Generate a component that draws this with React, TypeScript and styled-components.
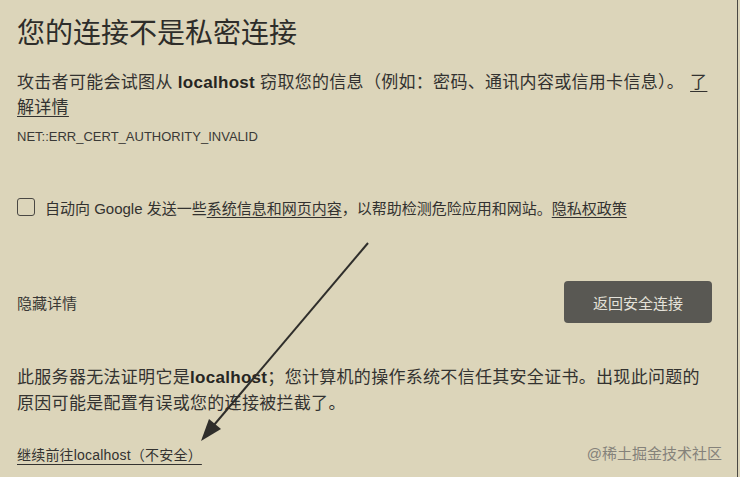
import styled, { createGlobalStyle } from "styled-components"

const Global = createGlobalStyle`
  html, body {
    margin: 0;
    padding: 0;
    background: #dcd5ba;
  }
  body {
    font-family: "Liberation Sans", "Noto Sans CJK SC", sans-serif;
    color: #333230;
  }
`

const Page = styled.div`
  position: relative;
  box-sizing: border-box;
  width: 738px;
  height: 477px;
  padding: 16px 25px 0 17px;
  border-right: 1px solid #4a4843;
  background: #dcd5ba;
  overflow: hidden;
`

const Title = styled.h1`
  margin: 0;
  font-size: 28px;
  line-height: 36px;
  font-weight: 400;
  color: #2e2d2a;
`

const Lead = styled.p`
  margin: 18px 0 0;
  font-size: 17px;
  line-height: 25px;
  letter-spacing: 0.3px;
`

const Strong = styled.b`
  font-weight: 700;
  color: #262522;
`

const Link = styled.a`
  color: inherit;
  text-decoration: underline;
  text-underline-offset: 3px;
  text-decoration-thickness: 1px;
`

const Spaced = styled.span`
  margin-left: 6px;
`

const ErrorCode = styled.div`
  margin-top: 7px;
  font-size: 13px;
  line-height: 20px;
  color: #3a3936;
`

const OptIn = styled.label`
  display: flex;
  align-items: center;
  gap: 10px;
  margin-top: 48px;
  height: 24px;
  font-size: 15px;
`

const Box = styled.input`
  appearance: none;
  margin: 0;
  width: 18px;
  height: 18px;
  border: 1.5px solid #4a4844;
  border-radius: 3px;
  background: transparent;
  flex-shrink: 0;
`

const Actions = styled.div`
  display: flex;
  align-items: center;
  justify-content: space-between;
  margin-top: 62px;
  height: 42px;
`

const Toggle = styled.span`
  font-size: 15px;
  color: #3a3936;
`

const Primary = styled.button`
  width: 148px;
  height: 42px;
  border: none;
  border-radius: 4px;
  background: #595853;
  color: #e4e2da;
  font-family: inherit;
  font-size: 15px;
`

const Explain = styled.p`
  margin: 42px 0 0;
  font-size: 17px;
  line-height: 26px;
  letter-spacing: 0.3px;
`

const Footer = styled.div`
  display: flex;
  align-items: center;
  justify-content: space-between;
  margin-top: 28px;
  margin-right: -10px;
`

const Proceed = styled(Link)`
  font-size: 14px;
  line-height: 20px;
  padding-right: 4px;
  text-underline-offset: 4px;
  letter-spacing: 0.2px;
`

const Mark = styled.span`
  font-size: 15px;
  color: #85827a;
  margin-top: -5px;
`

const Overlay = styled.svg`
  position: absolute;
  left: 0;
  top: 0;
  pointer-events: none;
`

export default function App() {
  return (
    <Page>
      <Global />
      <Title>您的连接不是私密连接</Title>
      <Lead>
        攻击者可能会试图从 <Strong>localhost</Strong> 窃取您的信息（例如：密码、通讯内容或信用卡信息）。<Spaced><Link>了<br />解详情</Link></Spaced>
      </Lead>
      <ErrorCode>NET::ERR_CERT_AUTHORITY_INVALID</ErrorCode>
      <OptIn>
        <Box type="checkbox" />
        <span>
          自动向 Google 发送一些<Link>系统信息和网页内容</Link>，以帮助检测危险应用和网站。<Link>隐私权政策</Link>
        </span>
      </OptIn>
      <Actions>
        <Toggle>隐藏详情</Toggle>
        <Primary>返回安全连接</Primary>
      </Actions>
      <Explain>
        此服务器无法证明它是<Strong>localhost</Strong>；您计算机的操作系统不信任其安全证书。出现此问题的<br />
        原因可能是配置有误或您的连接被拦截了。
      </Explain>
      <Footer>
        <Proceed>继续前往localhost（不安全）</Proceed>
        <Mark>@稀土掘金技术社区</Mark>
      </Footer>
      <Overlay width="738" height="477" viewBox="0 0 738 477">
        <line x1="368" y1="243" x2="214" y2="425" stroke="#2f2e2b" strokeWidth="2" />
        <polygon points="201,441 221,429 209,419" fill="#2f2e2b" />
      </Overlay>
    </Page>
  )
}
